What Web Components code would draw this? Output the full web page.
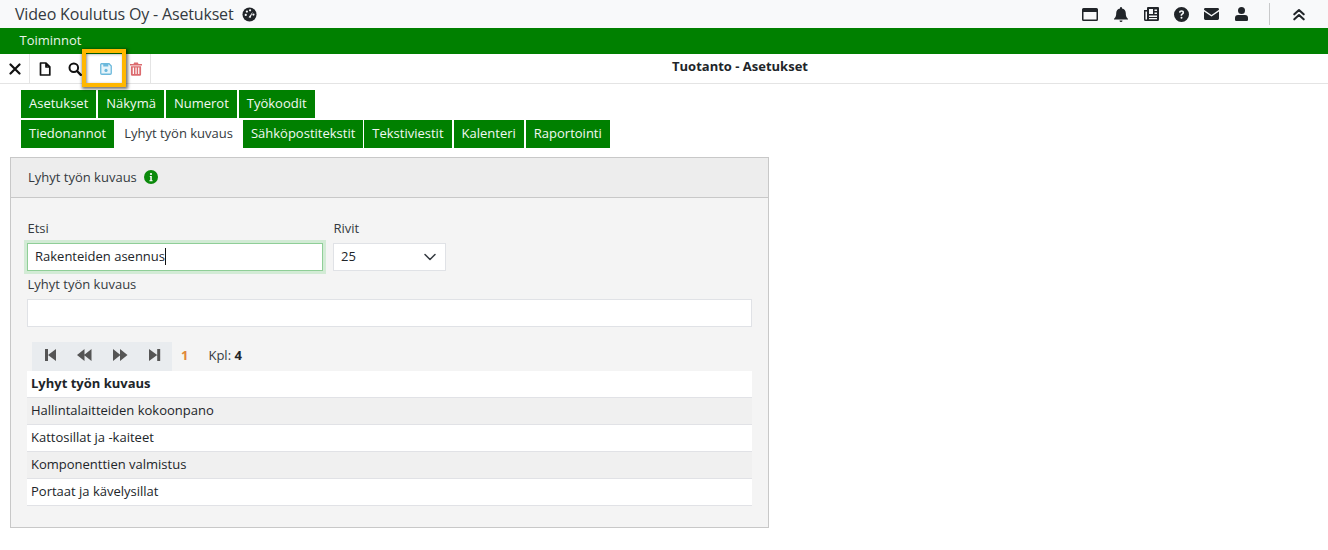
<!DOCTYPE html>
<html lang="fi">
<head>
<meta charset="utf-8">
<title>Tuotanto - Asetukset</title>
<style>
  html, body { margin: 0; padding: 0; background: #fff; }
  body { font: 13px/18px "Open Sans", sans-serif; color: #212529; height: 550px; overflow: hidden; }
</style>
</head>
<body>
<app-topbar>Video Koulutus Oy - Asetukset</app-topbar>
<app-menubar>Toiminnot</app-menubar>
<app-toolbar>Tuotanto - Asetukset</app-toolbar>
<tab-row>
  <tab-item>Asetukset</tab-item><tab-item>Näkymä</tab-item><tab-item>Numerot</tab-item><tab-item>Työkoodit</tab-item>
</tab-row>
<tab-row>
  <tab-item>Tiedonannot</tab-item><tab-item active>Lyhyt työn kuvaus</tab-item><tab-item style="margin-right:-1px">Sähköpostitekstit</tab-item><tab-item>Tekstiviestit</tab-item><tab-item>Kalenteri</tab-item><tab-item>Raportointi</tab-item>
</tab-row>
<app-panel heading="Lyhyt työn kuvaus">
  <search-form></search-form>
  <pager-bar></pager-bar>
  <desc-table>
    <desc-row head>Lyhyt työn kuvaus</desc-row>
    <desc-row alt>Hallintalaitteiden kokoonpano</desc-row>
    <desc-row>Kattosillat ja -kaiteet</desc-row>
    <desc-row alt>Komponenttien valmistus</desc-row>
    <desc-row>Portaat ja kävelysillat</desc-row>
  </desc-table>
</app-panel>

<script>
const topbarTemplate = document.createElement('template');
topbarTemplate.innerHTML = `
  <style>
    :host { display: flex; align-items: center; height: 28px; background: #f8f9fa; color: #212529; }
    .title { margin-left: 15px; font-size: 16px; letter-spacing: -.17px; line-height: 28px; color: #343a40; }
    .gauge { margin-left: 9px; width: 15px; height: 15px; }
    .icons { margin-left: auto; display: flex; align-items: center; height: 28px; }
    .icons svg { display: block; fill: #212529; }
    .slot { width: 30px; display: flex; justify-content: center; }
    .window { margin-right: 1px; }
    .sep { width: 1px; height: 22px; background: #c8c9ca; margin: 0 23px 0 13px; }
    .up { width: 12px; margin-right: 23px; }
  </style>
  <div class="title"><slot></slot></div>
  <svg class="gauge" viewBox="0 0 16 16">
    <circle cx="8" cy="8" r="7.5" fill="#212529"/>
    <circle cx="4" cy="8.5" r="1.2" fill="#f8f9fa"/><circle cx="5.2" cy="4.8" r="1.2" fill="#f8f9fa"/>
    <circle cx="8.6" cy="3.5" r="1.2" fill="#f8f9fa"/><circle cx="12.2" cy="8" r="1.2" fill="#f8f9fa"/>
    <path d="M7 11 L11.5 5 L9 11.8Z" fill="#f8f9fa"/>
  </svg>
  <div class="icons">
    <div class="slot window"><svg width="16" height="13" viewBox="0 0 16 13"><path fill-rule="evenodd" d="M1.500 0h13A1.500 1.500 0 0 1 16 1.500v10a1.500 1.500 0 0 1-1.500 1.500h-13A1.500 1.500 0 0 1 0 11.500v-10A1.500 1.500 0 0 1 1.500 0ZM1.500 4v7.500h13V4Z"/></svg></div>
    <div class="slot"><svg width="14" height="15" viewBox="0 0 14 15"><path d="M7 0a1 1 0 0 1 1 1v.6c2.3.4 3.8 2.3 3.8 4.6 0 3.6 1.2 4.5 2.2 5.6v.7H0v-.7c1-1.100 2.200-2 2.200-5.600C2.200 3.900 3.700 2 6 1.600V1a1 1 0 0 1 1-1ZM5.500 13.500h3a1.500 1.500 0 0 1-3 0Z"/></svg></div>
    <div class="slot"><svg width="15" height="14" viewBox="0 0 15 14"><path fill-rule="evenodd" d="M4 0h10a1 1 0 0 1 1 1v11.500a1.500 1.500 0 0 1-1.500 1.500H1.500A1.500 1.500 0 0 1 0 12.500V3h3V1a1 1 0 0 1 1-1ZM1.500 4.500v8h1.500v-8ZM5 2v5h4V2ZM10.500 2.500v1.500h2.500V2.500ZM10.500 5.500V7h2.500V5.500ZM5 8.500V10h8V8.500ZM5 11v1.300h8V11Z"/></svg></div>
    <div class="slot"><svg width="15" height="15" viewBox="0 0 15 15"><path fill-rule="evenodd" d="M7.500 0a7.500 7.500 0 1 1 0 15 7.500 7.500 0 0 1 0-15ZM7.600 3.300c-1.500 0-2.500.800-2.700 2.100l1.500.4c.1-.7.500-1.100 1.100-1.100.6 0 1 .3 1 .8 0 .4-.3.700-.8 1-.8.500-1.100 1-1.100 1.800v.4h1.500v-.3c0-.4.200-.6.800-1 .8-.5 1.200-1.100 1.200-2 0-1.300-1-2.100-2.500-2.100ZM7.500 9.700a1 1 0 1 0 0 2 1 1 0 0 0 0-2Z"/></svg></div>
    <div class="slot"><svg width="15" height="12" viewBox="0 0 15 12"><path d="M1.400 0h12.200A1.400 1.400 0 0 1 15 1.400v.4L7.500 7 0 1.800v-.4A1.400 1.400 0 0 1 1.400 0ZM0 3.500l7.500 5.100L15 3.500v7.100a1.400 1.400 0 0 1-1.400 1.400H1.400A1.400 1.400 0 0 1 0 10.600Z"/></svg></div>
    <div class="slot"><svg width="13" height="14" viewBox="0 0 13 14"><circle cx="6.500" cy="3.500" r="3.500"/><path d="M3 8h7a3 3 0 0 1 3 3v1.700a1.300 1.300 0 0 1-1.300 1.300H1.300A1.300 1.300 0 0 1 0 12.700V11a3 3 0 0 1 3-3Z"/></svg></div>
    <div class="sep"></div>
    <svg class="up" width="12" height="13" viewBox="0 0 12 13"><path d="M1.300 6.300L6 2l4.700 4.300M1.300 11.300L6 7l4.700 4.300" fill="none" stroke="#212529" stroke-width="2.100" stroke-linecap="round" stroke-linejoin="round"/></svg>
  </div>
`;

class AppTopbar extends HTMLElement {
  constructor() {
    super();
    this.attachShadow({ mode: 'open' }).appendChild(topbarTemplate.content.cloneNode(true));
  }
}

const menubarTemplate = document.createElement('template');
menubarTemplate.innerHTML = `
  <style>
    :host { display: block; height: 26px; background: #008000; color: #fff; }
    .item { padding-left: 19.5px; line-height: 24px; color: #e8f4e8; }
  </style>
  <div class="item"><slot></slot></div>
`;

class AppMenubar extends HTMLElement {
  constructor() {
    super();
    this.attachShadow({ mode: 'open' }).appendChild(menubarTemplate.content.cloneNode(true));
  }
}

const toolbarTemplate = document.createElement('template');
toolbarTemplate.innerHTML = `
  <style>
    :host { display: block; position: relative; height: 30px; box-sizing: border-box; border-bottom: 1px solid #e4e4e4; background: #fff; }
    .bar { display: flex; align-items: stretch; height: 29px; }
    .btn { width: 30px; display: flex; align-items: center; justify-content: center; }
    .btn svg { display: block; }
    .close { border-right: 1px solid #e4e4e4; width: 29px; }
    .save { width: 32px; }
    .trash { border-right: 1px solid #e4e4e4; width: 28px; }
    .heading { position: absolute; left: 152px; right: 0; top: 0; line-height: 24px; text-align: center; font-weight: 700; font-size: 13px; color: #212529; }
    .focus { position: absolute; left: 82px; top: -5px; width: 44px; height: 38px; box-sizing: border-box; border: 4px solid #ffb700; box-shadow: 1px 1px 3px 1px rgba(0,0,0,.55), inset 1px 1px 3px rgba(0,0,0,.45); }
  </style>
  <div class="bar">
    <div class="btn close"><svg width="12" height="12" viewBox="0 0 12 12"><path d="M1.500 1.500l9 9M10.500 1.500l-9 9" stroke="#111" stroke-width="2.200" stroke-linecap="round"/></svg></div>
    <div class="btn"><svg width="12" height="14" viewBox="0 0 12 14"><path d="M1.500 1h5.500L10.800 4.800V13H1.500Z M7 1v4h3.800" fill="none" stroke="#111" stroke-width="1.700" stroke-linejoin="round"/></svg></div>
    <div class="btn"><svg width="14" height="14" viewBox="0 0 14 14"><circle cx="5.800" cy="5.800" r="4.300" fill="none" stroke="#111" stroke-width="2"/><path d="M9 9l3.800 3.800" stroke="#111" stroke-width="2.400" stroke-linecap="round"/></svg></div>
    <div class="btn save"><svg width="12" height="12" viewBox="0 0 13 13"><path d="M1.500 .8h8.300L12.200 3.200V11a1.200 1.200 0 0 1-1.200 1.200H2A1.200 1.200 0 0 1 .8 11V1.500Z" fill="#e6f4fa" stroke="#6cb9dc" stroke-width="1.400"/><path d="M3.500 1h5.500v2.800H3.500Z" fill="#6cb9dc"/><circle cx="6.500" cy="8" r="1.700" fill="#6cb9dc"/></svg></div>
    <div class="btn trash"><svg width="12" height="14" viewBox="0 0 13 15"><path d="M0 2.200h13v1.600H0ZM4.500 .5h4l.7 1.700H3.800Z" fill="#dc6b6f"/><path fill-rule="evenodd" d="M1 4.500h11V13.500a1.300 1.300 0 0 1-1.300 1.300H2.300A1.300 1.300 0 0 1 1 13.500ZM3 6v7h1.300V6ZM5.900 6v7h1.300V6ZM8.800 6v7h1.300V6Z" fill="#dc6b6f"/></svg></div>
  </div>
  <div class="heading"><slot></slot></div>
  <div class="focus"></div>
`;

class AppToolbar extends HTMLElement {
  constructor() {
    super();
    this.attachShadow({ mode: 'open' }).appendChild(toolbarTemplate.content.cloneNode(true));
  }
}

const tabRowTemplate = document.createElement('template');
tabRowTemplate.innerHTML = `
  <style>
    :host { display: flex; gap: 2px; margin: 6px 0 0 21px; height: 28px; }
    :host(:nth-of-type(2)) { margin-top: 2px; }
  </style>
  <slot></slot>
`;

class TabRow extends HTMLElement {
  constructor() {
    super();
    this.attachShadow({ mode: 'open' }).appendChild(tabRowTemplate.content.cloneNode(true));
  }
}

const tabItemTemplate = document.createElement('template');
tabItemTemplate.innerHTML = `
  <style>
    :host { display: block; padding: 0 8px; line-height: 26px; background: #008000; color: #f2f8f2; }
    :host([active]) { background: #fff; color: #343a40; }
  </style>
  <slot></slot>
`;

class TabItem extends HTMLElement {
  constructor() {
    super();
    this.attachShadow({ mode: 'open' }).appendChild(tabItemTemplate.content.cloneNode(true));
  }
}

const panelTemplate = document.createElement('template');
panelTemplate.innerHTML = `
  <style>
    :host { display: block; width: 759px; height: 371px; box-sizing: border-box; margin: 9px 0 0 10px; border: 1px solid #c8c8c8; background: #f4f4f4; }
    .head { display: flex; align-items: center; gap: 7px; height: 37px; padding: 0 0 2px 17px; border-bottom: 1px solid #c8c8c8; background: #ededed; color: #343a40; }
    .head svg { display: block; }
    .body { padding: 21px 16px 0; }
  </style>
  <div class="head">
    <span class="text"></span>
    <svg width="14" height="14" viewBox="0 0 14 14"><circle cx="7" cy="7" r="7" fill="#0b8a0b"/><circle cx="7" cy="4" r="1.100" fill="#fff"/><path d="M5.800 6h2v4.200h.8v1H5.400v-1h.9V7h-.5Z" fill="#fff"/></svg>
  </div>
  <div class="body"><slot></slot></div>
`;

class AppPanel extends HTMLElement {
  constructor() {
    super();
    const root = this.attachShadow({ mode: 'open' });
    root.appendChild(panelTemplate.content.cloneNode(true));
    root.querySelector('.text').textContent = this.getAttribute('heading');
  }
}

const searchFormTemplate = document.createElement('template');
searchFormTemplate.innerHTML = `
  <style>
    :host { display: block; color: #343a40; }
    .row { display: flex; gap: 10px; }
    label { display: block; line-height: 18px; height: 24px; padding-left: .5px; }
    .field { box-sizing: border-box; height: 28px; background: #fff; border: 1px solid #e0e2e6; display: flex; align-items: center; padding: 0 0 2px 7px; color: #212529; }
    .search { width: 296px; border-color: #8fce97; box-shadow: 0 0 0 3px #d2ebd5; }
    .caret { display: inline-block; width: 1px; height: 17px; background: #111; }
    .rows { width: 113px; justify-content: space-between; padding-right: 9px; }
    .rows svg { display: block; margin-top: 2px; }
    .second { margin-top: 4px; }
    .wide { width: 725px; }
  </style>
  <div class="row">
    <div><label>Etsi</label><div class="field search">Rakenteiden asennus<span class="caret"></span></div></div>
    <div><label>Rivit</label><div class="field rows">25<svg width="12" height="8" viewBox="0 0 12 8"><path d="M1 1.500l5 5 5-5" fill="none" stroke="#343a40" stroke-width="1.500" stroke-linecap="round" stroke-linejoin="round"/></svg></div></div>
  </div>
  <div class="second"><label>Lyhyt työn kuvaus</label><div class="field wide"></div></div>
`;

class SearchForm extends HTMLElement {
  constructor() {
    super();
    this.attachShadow({ mode: 'open' }).appendChild(searchFormTemplate.content.cloneNode(true));
  }
}

const pagerTemplate = document.createElement('template');
pagerTemplate.innerHTML = `
  <style>
    :host { display: flex; align-items: flex-start; height: 29px; margin: 15px 0 0 5px; color: #343a40; }
    .nav { display: flex; align-items: center; box-sizing: border-box; width: 140px; height: 29px; padding-bottom: 3px; background: #e9ecef; }
    .nav svg { display: block; fill: #555; }
    .page { margin-left: 9px; line-height: 26px; font-weight: 700; color: #e0873a; }
    .count { margin-left: 20px; line-height: 26px; }
    b { color: #212529; }
  </style>
  <div class="nav">
    <svg style="margin-left:13px" width="12" height="12" viewBox="0 0 12 12"><path d="M0 0h3v12H0ZM11 0v12L3 6Z"/></svg>
    <svg style="margin-left:20px" width="15" height="12" viewBox="0 0 15 12"><path d="M7.500 0v12L0 6ZM14.500 0v12L7 6Z"/></svg>
    <svg style="margin-left:21px" width="15" height="12" viewBox="0 0 15 12"><path d="M0 0v12l7.500-6ZM7 0v12l7.500-6Z"/></svg>
    <svg style="margin-left:21px" width="12" height="12" viewBox="0 0 12 12"><path d="M0 0v12l8.200-6ZM8.200 0h3v12h-3Z"/></svg>
  </div>
  <span class="page">1</span>
  <span class="count">Kpl: <b>4</b></span>
`;

class PagerBar extends HTMLElement {
  constructor() {
    super();
    this.attachShadow({ mode: 'open' }).appendChild(pagerTemplate.content.cloneNode(true));
  }
}

const tableTemplate = document.createElement('template');
tableTemplate.innerHTML = `
  <style>
    :host { display: block; width: 725px; }
  </style>
  <slot></slot>
`;

class DescTable extends HTMLElement {
  constructor() {
    super();
    this.attachShadow({ mode: 'open' }).appendChild(tableTemplate.content.cloneNode(true));
  }
}

const rowTemplate = document.createElement('template');
rowTemplate.innerHTML = `
  <style>
    :host { display: block; box-sizing: border-box; height: 27px; line-height: 24px; padding-left: 4px; background: #fff; border-bottom: 1px solid #e1e2e6; color: #212529; }
    :host([alt]) { background: #f0f0f0; }
    :host([head]) { font-weight: 700; }
  </style>
  <slot></slot>
`;

class DescRow extends HTMLElement {
  constructor() {
    super();
    this.attachShadow({ mode: 'open' }).appendChild(rowTemplate.content.cloneNode(true));
  }
}

customElements.define('app-topbar', AppTopbar);
customElements.define('app-menubar', AppMenubar);
customElements.define('app-toolbar', AppToolbar);
customElements.define('tab-row', TabRow);
customElements.define('tab-item', TabItem);
customElements.define('app-panel', AppPanel);
customElements.define('search-form', SearchForm);
customElements.define('pager-bar', PagerBar);
customElements.define('desc-table', DescTable);
customElements.define('desc-row', DescRow);
</script>
</body>
</html>
